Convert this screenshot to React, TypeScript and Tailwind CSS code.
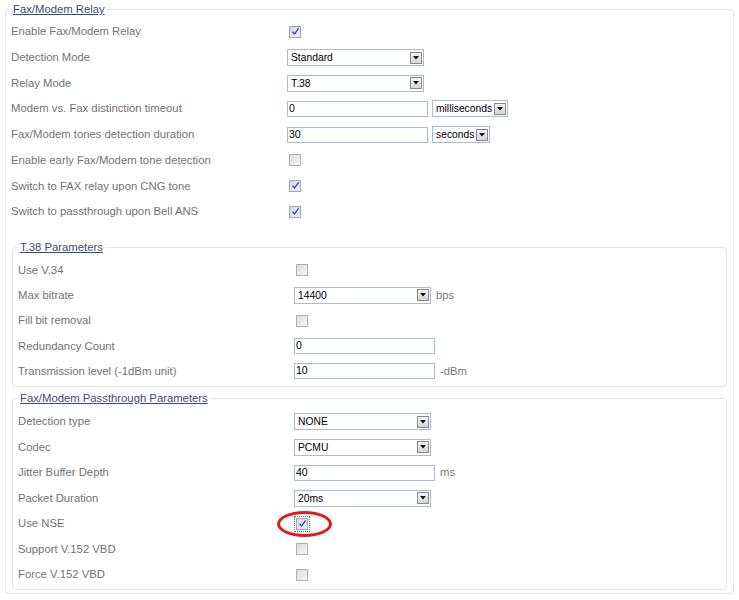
import React from 'react';

const labelFont = { fontFamily: '"Liberation Sans", Arial, sans-serif' };
const ctrlFont = { fontFamily: '"Liberation Sans", Arial, sans-serif' };

const Check = ({ checked = false }: { checked?: boolean }) => (
  <div
    className={
      checked
        ? 'w-[12px] h-[12px] border border-[#9ea7bf] bg-gradient-to-br from-[#d3d7e6] to-[#f2f3f8] flex items-center justify-center'
        : 'w-[12px] h-[12px] border border-[#b0b0b0] bg-gradient-to-br from-[#dcdcdc] to-[#f7f7f7]'
    }
  >
    {checked && (
      <svg width="9" height="9" viewBox="0 0 9 9">
        <path d="M1.5 4.8 L3.6 7 L7.6 1.4" fill="none" stroke="#3546b5" strokeWidth="1.3" />
      </svg>
    )}
  </div>
);

const DropBtn = () => (
  <div className="w-[12px] h-[12px] border border-[#8a8a8a] bg-gradient-to-b from-[#f4f4f4] to-[#d6d6d6] flex items-center justify-center mr-[1px] shrink-0">
    <svg width="6" height="4" viewBox="0 0 6 4">
      <path d="M0 0 H6 L3 3.5 Z" fill="#111" />
    </svg>
  </div>
);

const Select = ({ value, className }: { value: string; className: string }) => (
  <div
    className={`h-[17px] border border-[#a9bdd2] bg-white flex items-center justify-between text-[10.3px] text-black pl-[3px] ${className}`}
    style={ctrlFont}
  >
    <span>{value}</span>
    <DropBtn />
  </div>
);

const Input = ({ value, className }: { value: string; className: string }) => (
  <div
    className={`h-[16px] border border-[#a9bdd2] bg-white flex items-center text-[10.5px] text-black pl-[1px] ${className}`}
    style={ctrlFont}
  >
    {value}
  </div>
);

const Unit = ({ children }: { children: React.ReactNode }) => (
  <span className="text-[11.3px] text-[#7a7a7a] ml-[5px]" style={labelFont}>
    {children}
  </span>
);

const Row = ({ label, h, children }: { label: string; h: string; children?: React.ReactNode }) => (
  <div className={`flex items-center ${h}`}>
    <div className="w-[276px] shrink-0 text-[11.3px] text-[#737373]" style={labelFont}>
      {label}
    </div>
    <div className="flex items-center">{children}</div>
  </div>
);

const Legend = ({ children }: { children: React.ReactNode }) => (
  <legend className="px-[2px] text-[11.3px] leading-[15px] text-[#3e4c6e] underline" style={labelFont}>
    {children}
  </legend>
);

export default function App() {
  const outerH = 'h-[25.7px]';
  const t38H = 'h-[25.3px]';
  const ptH = 'h-[25.5px]';

  return (
    <div className="w-[739px] h-[600px] bg-white pt-[2px]">
      <fieldset className="ml-[5px] w-[729px] border border-[#dfe5eb] rounded-[4px] px-[5px] pt-[2px] pb-[3px]">
        <Legend>Fax/Modem Relay</Legend>

        <Row label="Enable Fax/Modem Relay" h={outerH}>
          <div className="ml-[2px]"><Check checked /></div>
        </Row>
        <Row label="Detection Mode" h={outerH}>
          <Select value="Standard" className="w-[137px]" />
        </Row>
        <Row label="Relay Mode" h={outerH}>
          <Select value="T.38" className="w-[137px]" />
        </Row>
        <Row label="Modem vs. Fax distinction timeout" h={outerH}>
          <Input value="0" className="w-[141px]" />
          <Select value="milliseconds" className="w-[76px] ml-[4px]" />
        </Row>
        <Row label="Fax/Modem tones detection duration" h={outerH}>
          <Input value="30" className="w-[141px]" />
          <Select value="seconds" className="w-[58px] ml-[4px]" />
        </Row>
        <Row label="Enable early Fax/Modem tone detection" h={outerH}>
          <div className="ml-[2px]"><Check /></div>
        </Row>
        <Row label="Switch to FAX relay upon CNG tone" h={outerH}>
          <div className="ml-[2px]"><Check checked /></div>
        </Row>
        <Row label="Switch to passthrough upon Bell ANS" h={outerH}>
          <div className="ml-[2px]"><Check checked /></div>
        </Row>

        {/* T.38 */}
        <fieldset className="mt-[15px] mx-[1px] border border-[#dfe5eb] rounded-[4px] px-[5px] pt-[3px] pb-[2px]">
          <Legend>T.38 Parameters</Legend>
          <Row label="Use V.34" h={t38H}>
            <div className="ml-[2px]"><Check /></div>
          </Row>
          <Row label="Max bitrate" h={t38H}>
            <Select value="14400" className="w-[137px]" />
            <Unit>bps</Unit>
          </Row>
          <Row label="Fill bit removal" h={t38H}>
            <div className="ml-[2px]"><Check /></div>
          </Row>
          <Row label="Redundancy Count" h={t38H}>
            <Input value="0" className="w-[141px]" />
          </Row>
          <Row label="Transmission level (-1dBm unit)" h={t38H}>
            <Input value="10" className="w-[141px]" />
            <Unit>-dBm</Unit>
          </Row>
        </fieldset>

        {/* Passthrough */}
        <fieldset className="mt-[4px] mx-[1px] border border-[#dfe5eb] rounded-[4px] px-[5px] pt-[3px] pb-[2px]">
          <Legend>Fax/Modem Passthrough Parameters</Legend>
          <Row label="Detection type" h={ptH}>
            <Select value="NONE" className="w-[137px]" />
          </Row>
          <Row label="Codec" h={ptH}>
            <Select value="PCMU" className="w-[137px]" />
          </Row>
          <Row label="Jitter Buffer Depth" h={ptH}>
            <Input value="40" className="w-[141px]" />
            <Unit>ms</Unit>
          </Row>
          <Row label="Packet Duration" h={ptH}>
            <Select value="20ms" className="w-[137px]" />
          </Row>
          <Row label="Use NSE" h={ptH}>
            <div className="relative border border-dotted border-[#777] p-[1px]">
              <Check checked />
              <div className="absolute left-[-18px] top-[-6px] w-[55px] h-[26px] rounded-[50%] border-[3px] border-[#e3191b]" />
            </div>
          </Row>
          <Row label="Support V.152 VBD" h={ptH}>
            <div className="ml-[2px]"><Check /></div>
          </Row>
          <Row label="Force V.152 VBD" h={ptH}>
            <div className="ml-[2px]"><Check /></div>
          </Row>
        </fieldset>
      </fieldset>
    </div>
  );
}
